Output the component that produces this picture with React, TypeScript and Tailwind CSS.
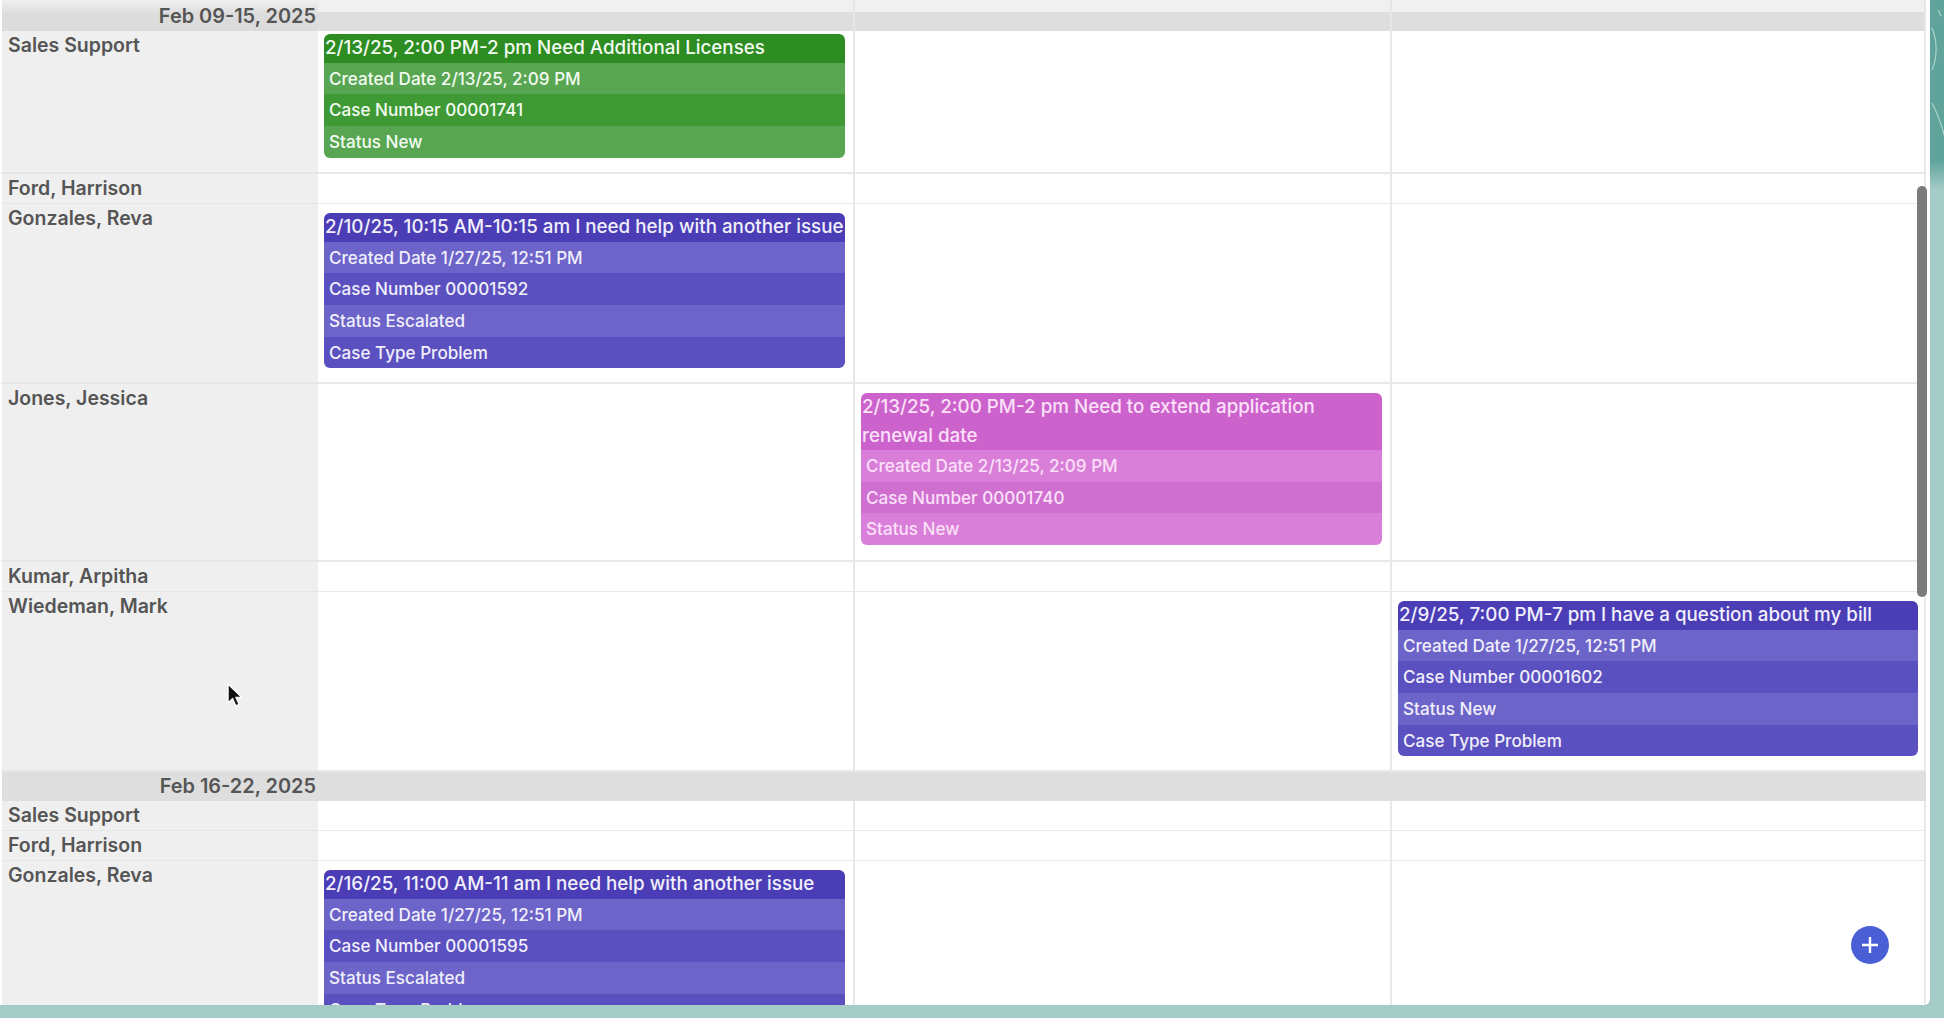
const tones = {
  green: { title: 'bg-[#2d8c22]', odd: 'bg-[#58a651]', even: 'bg-[#3f9a35]', text: 'text-[#f3fbf1]' },
  purple: { title: 'bg-[#4a3db5]', odd: 'bg-[#6c64c8]', even: 'bg-[#5a50bf]', text: 'text-[#f1effb]' },
  pink: { title: 'bg-[#cc62cc]', odd: 'bg-[#d97fd9]', even: 'bg-[#cf6fd0]', text: 'text-[#fbe0f8]' },
}

type Tone = keyof typeof tones

type Ev = { title: string; tone: Tone; lines: string[] }

function EventCard({ ev }: { ev: Ev }) {
  const t = tones[ev.tone]
  return (
    <div className={`overflow-hidden rounded-[6px] ${t.text}`}>
      <div className={`${t.title} pl-px text-[18.8px] leading-[28.5px] font-medium`}>{ev.title}</div>
      {ev.lines.map((l, i) => (
        <div key={l} className={`${i % 2 === 0 ? t.odd : t.even} pl-[5px] text-[17.1px] leading-[31.7px] font-medium`}>
          {l}
        </div>
      ))}
    </div>
  )
}

function Row({ name, height, ev, col = 0, pad = 'pt-[9px]' }: { name: string; height: string; ev?: Ev; col?: number; pad?: string }) {
  return (
    <div className={`grid grid-cols-[318px_537px_537px_534px] ${height}`}>
      <div className="border-b-2 border-[#e6e6e6] border-l-2 border-l-white bg-[#efefef] pl-[6px] text-[19.5px] leading-[29px] font-semibold text-[#555555]">
        {name}
      </div>
      {[0, 1, 2].map(i => (
        <div key={i} className={`border-r-2 border-b-2 border-[#e8e8e8] bg-white pl-[6px] ${pad} ${i === 2 ? 'pr-[6px]' : 'pr-[8px]'}`}>
          {ev && col === i && <EventCard ev={ev} />}
        </div>
      ))}
    </div>
  )
}

function WeekRow({ label, first }: { label: string; first?: boolean }) {
  const cell = first
    ? 'bg-[linear-gradient(to_bottom,#f0f0f0_12px,#dedede_12px)]'
    : 'bg-[#dedede]'
  return (
    <div className={`grid grid-cols-[318px_537px_537px_534px] ${first ? 'h-[31px]' : 'h-[29px]'}`}>
      <div className={`border-l-2 border-white pr-[2px] text-right text-[19.9px] font-semibold text-[#555555] ${first ? 'bg-[linear-gradient(to_bottom,#f0f0f0,#dcdcdc_45%)] leading-[32px]' : 'bg-[#dedede] leading-[29px]'}`}>
        {label}
      </div>
      {[0, 1, 2].map(i => (
        <div key={i} className={`border-r-2 ${first ? 'border-[#e6e6e6]' : 'border-[#dedede]'} ${cell}`} />
      ))}
    </div>
  )
}

export default function App() {
  return (
    <div className="flex h-[1018px] w-[1944px] overflow-hidden bg-[#a5cbc6] font-['Inter',sans-serif]">
      <div className="relative h-[1005px] w-[1930px] shrink-0 overflow-hidden rounded-br-[6px] bg-white">
        <WeekRow label="Feb 09-15, 2025" first />
        <Row
          name="Sales Support"
          height="h-[143px]"
          pad="pt-[3px]"
          ev={{
            title: '2/13/25, 2:00 PM-2 pm Need Additional Licenses',
            tone: 'green',
            lines: ['Created Date 2/13/25, 2:09 PM', 'Case Number 00001741', 'Status New'],
          }}
        />
        <Row name="Ford, Harrison" height="h-[30px]" />
        <Row
          name="Gonzales, Reva"
          height="h-[180px]"
          ev={{
            title: '2/10/25, 10:15 AM-10:15 am I need help with another issue',
            tone: 'purple',
            lines: ['Created Date 1/27/25, 12:51 PM', 'Case Number 00001592', 'Status Escalated', 'Case Type Problem'],
          }}
        />
        <Row
          name="Jones, Jessica"
          height="h-[178px]"
          col={1}
          ev={{
            title: '2/13/25, 2:00 PM-2 pm Need to extend application renewal date',
            tone: 'pink',
            lines: ['Created Date 2/13/25, 2:09 PM', 'Case Number 00001740', 'Status New'],
          }}
        />
        <Row name="Kumar, Arpitha" height="h-[30px]" />
        <Row
          name="Wiedeman, Mark"
          height="h-[180px]"
          col={2}
          ev={{
            title: '2/9/25, 7:00 PM-7 pm I have a question about my bill',
            tone: 'purple',
            lines: ['Created Date 1/27/25, 12:51 PM', 'Case Number 00001602', 'Status New', 'Case Type Problem'],
          }}
        />
        <WeekRow label="Feb 16-22, 2025" />
        <Row name="Sales Support" height="h-[30px]" />
        <Row name="Ford, Harrison" height="h-[30px]" />
        <Row
          name="Gonzales, Reva"
          height="h-[180px]"
          ev={{
            title: '2/16/25, 11:00 AM-11 am I need help with another issue',
            tone: 'purple',
            lines: ['Created Date 1/27/25, 12:51 PM', 'Case Number 00001595', 'Status Escalated', 'Case Type Problem'],
          }}
        />

        <div className="absolute top-[186px] left-[1917px] h-[411px] w-[10px] rounded-full bg-[#7b7b7b]" />

        <button type="button" className="absolute top-[926px] left-[1851px] flex h-[38px] w-[38px] items-center justify-center rounded-full bg-[#4a5fd5]">
          <svg width="22" height="22" viewBox="0 0 22 22" fill="none" stroke="white" strokeWidth="2.4">
            <path d="M11 3v16M3 11h16" />
          </svg>
        </button>

        <svg className="absolute top-[682px] left-[226px]" width="17" height="26" viewBox="0 0 17 26">
          <path d="M2 2v19l4.6-4.3 3.2 7.3 3.4-1.5-3.2-7H16z" fill="#111111" stroke="white" strokeWidth="1.4" />
        </svg>
      </div>

      <div className="h-[1018px] w-[14px] bg-[linear-gradient(to_bottom,#5fa39b_160px,#a5cbc6_190px)]">
        <svg width="14" height="170" viewBox="0 0 14 170" fill="none" stroke="#a9d3ce" strokeWidth="1.2">
          <path d="M2 28c5 12 6 28 0 42" />
          <path d="M2 103c4 8 9 18 12 32" />
          <path d="M8 10l3 6" />
        </svg>
      </div>
    </div>
  )
}
